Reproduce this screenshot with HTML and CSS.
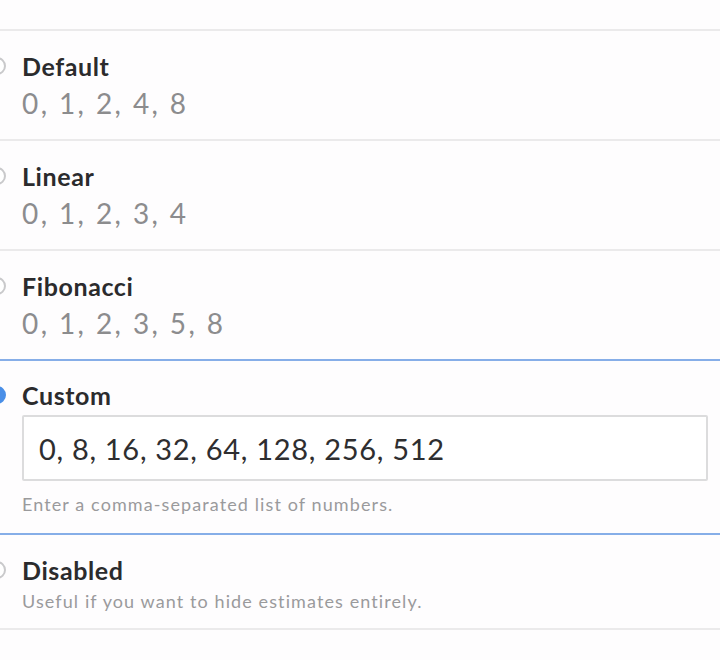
FILE: index.html
```html
<!DOCTYPE html>
<html lang="en">
<head>
<meta charset="utf-8">
<title>Estimate scale</title>
<link rel="stylesheet" href="styles.css">
</head>
<body>
<div class="scale-list">
  <div class="option option-prev"></div>

  <label class="option">
    <span class="radio"></span>
    <span class="option-body">
      <span class="option-title">Default</span>
      <span class="option-values">0, 1, 2, 4, 8</span>
    </span>
  </label>

  <label class="option">
    <span class="radio"></span>
    <span class="option-body">
      <span class="option-title">Linear</span>
      <span class="option-values">0, 1, 2, 3, 4</span>
    </span>
  </label>

  <label class="option">
    <span class="radio"></span>
    <span class="option-body">
      <span class="option-title">Fibonacci</span>
      <span class="option-values">0, 1, 2, 3, 5, 8</span>
    </span>
  </label>

  <label class="option option-selected">
    <span class="radio radio-checked"></span>
    <span class="option-body">
      <span class="option-title">Custom</span>
      <input class="custom-input" type="text" value="0, 8, 16, 32, 64, 128, 256, 512">
      <span class="option-hint">Enter a comma-separated list of numbers.</span>
    </span>
  </label>

  <label class="option option-compact">
    <span class="radio"></span>
    <span class="option-body">
      <span class="option-title">Disabled</span>
      <span class="option-hint">Useful if you want to hide estimates entirely.</span>
    </span>
  </label>
</div>
</body>
</html>
```

FILE: styles.css
```css
* {
  box-sizing: border-box;
}

html,
body {
  margin: 0;
  background: #fefdfe;
}

body {
  font-family: Lato, "Open Sans", sans-serif;
  color: #2e2e30;
  overflow: hidden;
}

.scale-list {
  display: flex;
  flex-direction: column;
  margin-left: -12px;
}

.option {
  display: flex;
  align-items: flex-start;
  gap: 16px;
  padding: 20px 12px 18px 0;
  border-bottom: 2px solid #ebeaeb;
}

.option-prev {
  height: 31px;
  padding: 0;
}

.option-selected {
  margin-top: -2px;
  border-top: 2px solid #86aee8;
  border-bottom-color: #86aee8;
  padding-top: 19px;
  padding-bottom: 17px;
}

.option-compact {
  padding-top: 20px;
  padding-bottom: 15px;
}

.radio {
  flex: none;
  width: 18px;
  height: 18px;
  margin-top: 6px;
  border: 2px solid #c9c9cb;
  border-radius: 50%;
  background: #fff;
}

.radio-checked {
  border-color: #4a8fe7;
  background: #4a8fe7;
}

.option-body {
  flex: 1;
  display: flex;
  flex-direction: column;
  min-width: 0;
}

.option-title {
  font-size: 25px;
  line-height: 30px;
  font-weight: 700;
  letter-spacing: 0.6px;
  color: #2b2b2d;
}

.option-values {
  margin-top: 4px;
  font-size: 28px;
  line-height: 36px;
  letter-spacing: 2.4px;
  color: #8c8c8e;
}

.custom-input {
  display: block;
  width: 100%;
  height: 66px;
  margin: 5px 0 0;
  padding: 0 15px;
  border: 2px solid #dcdcdd;
  border-radius: 2px;
  background: #fff;
  font-family: inherit;
  font-size: 29px;
  letter-spacing: 0.7px;
  color: #2e2e30;
  outline: none;
}

.option-hint {
  margin-top: 11px;
  font-size: 18px;
  line-height: 24px;
  letter-spacing: 1.1px;
  color: #9a9a9c;
}

.option-compact .option-hint {
  margin-top: 4px;
}
```
